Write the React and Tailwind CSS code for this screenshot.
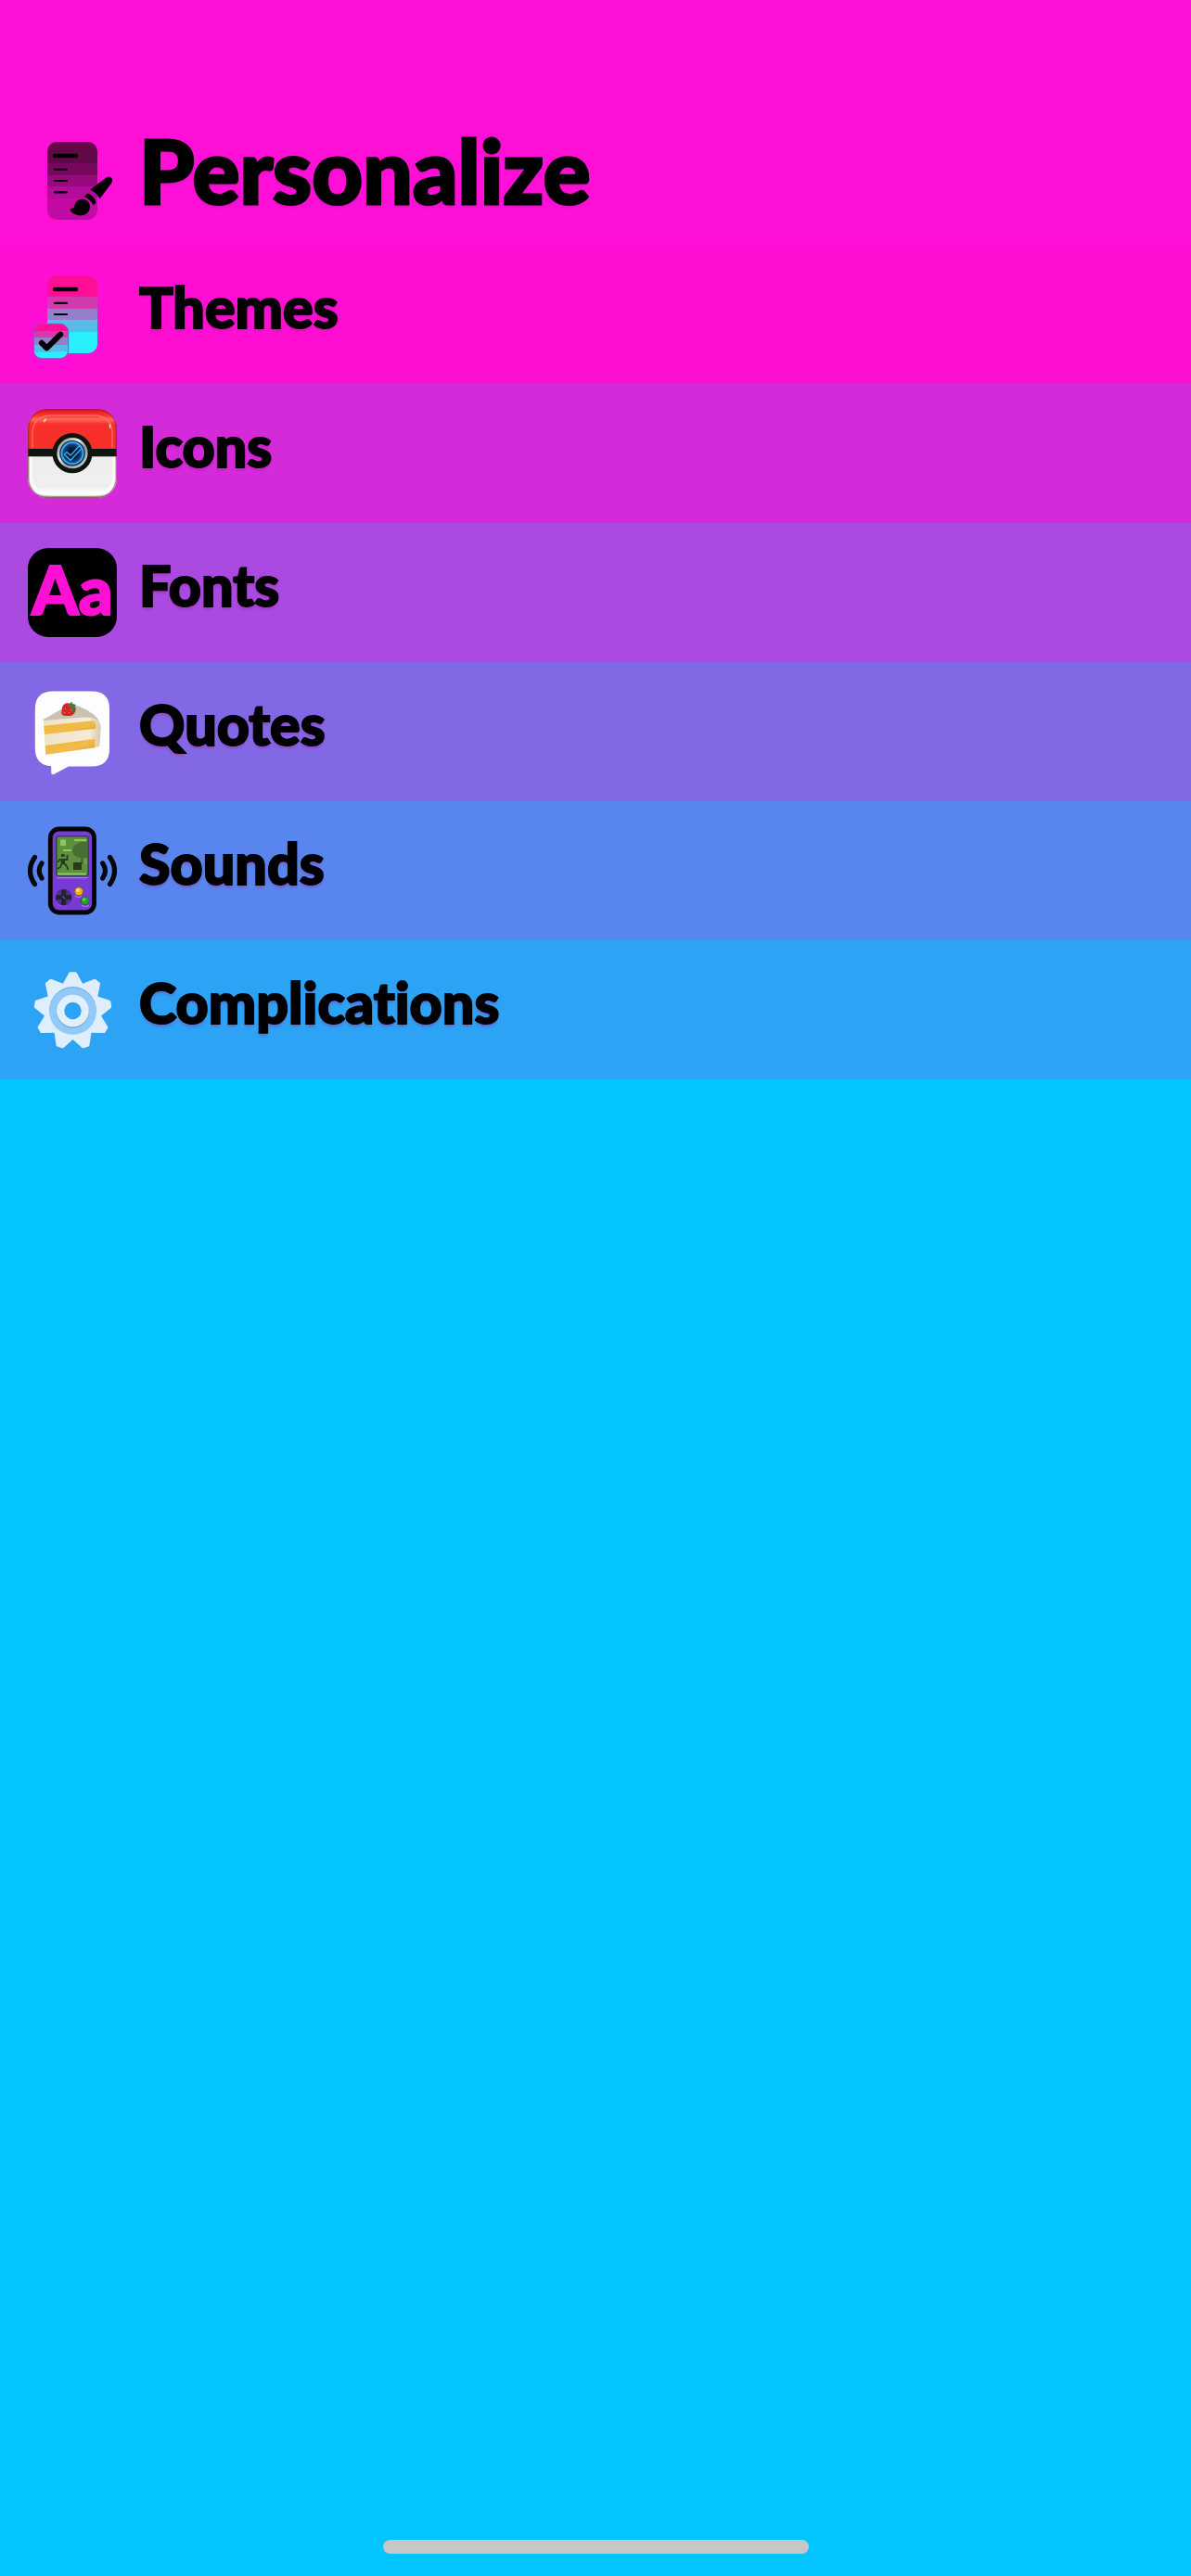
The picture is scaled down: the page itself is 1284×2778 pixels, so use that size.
import React from "react";

function Doc({ colors, lines }) {
  const edges = [6, 29, 42, 54, 67, 90];
  return (
    <g>
      <clipPath id={`doc-${lines}`}>
        <rect x="21" y="6" width="54" height="84" rx="10" />
      </clipPath>
      <g clipPath={`url(#doc-${lines})`}>
        {colors.map((c, i) => (
          <rect key={c} x="21" y={edges[i]} width="54" height={edges[i + 1] - edges[i]} fill={c} />
        ))}
      </g>
      <path d="M29 21H52" stroke="#000" strokeWidth="4.4" strokeLinecap="round" />
      {[35.8, 48, 60.3].slice(0, lines).map((y) => (
        <path key={y} d={`M29 ${y}H42`} stroke="#000" strokeWidth="2.2" strokeLinecap="round" />
      ))}
    </g>
  );
}

function PersonalizeIcon() {
  return (
    <svg viewBox="0 0 96 96" className="size-24 shrink-0" aria-hidden="true">
      <Doc lines={3} colors={["#610848", "#760860", "#960a7d", "#b50b99", "#c20ba5"]} />
      <path d="M67.3 57.6L84.5 44.6Q88.5 42.3 90.6 45.2Q92 47.5 90.2 50.6L77.6 67.4Q74 61 67.3 57.6Z" />
      <path d="M64.2 61.4Q72 64 73.6 71.5L70.8 74.2Q67.5 68 60.8 65.2Z" />
      <path d="M58.5 67.7C64 67.7 67 71.5 67 76C67 81.5 62.5 85.4 56.5 85.4C51.5 85.4 46.5 82.5 45.7 79.3C45.5 77.6 47 78 48.5 77.5C51 76.8 49.8 74.5 51.5 71.5C53 69 55.7 67.7 58.5 67.7Z" />
    </svg>
  );
}

function ThemesIcon() {
  const colors = ["#ff0e98", "#d33aae", "#937fcc", "#56bde6", "#29f0fd"];
  const edges = [58, 66.3, 73, 81, 88.3, 96];
  return (
    <svg viewBox="0 0 96 96" className="size-24 shrink-0" aria-hidden="true">
      <Doc lines={2} colors={colors} />
      <clipPath id="badge">
        <rect x="6.3" y="58.3" width="37.4" height="37.4" rx="9" />
      </clipPath>
      <g clipPath="url(#badge)">
        {colors.map((c, i) => (
          <rect key={c} x="6" y={edges[i]} width="38" height={edges[i + 1] - edges[i]} fill={c} />
        ))}
      </g>
      <rect x="6.3" y="58.3" width="37.4" height="37.4" rx="9" fill="none" stroke="#a044c8" strokeWidth="1" />
      <path d="M14.9 78.8L20.4 84.4L35.2 69.6" fill="none" stroke="#000" strokeWidth="6" strokeLinecap="round" strokeLinejoin="round" />
    </svg>
  );
}

function BallIcon() {
  return (
    <svg viewBox="0 0 96 96" className="size-24 shrink-0" aria-hidden="true">
      <defs>
        <clipPath id="ball"><rect width="96" height="96" rx="21" /></clipPath>
        <linearGradient id="red" x2="0" y2="1">
          <stop offset="0" stopColor="#f20d10" /><stop offset=".18" stopColor="#fa3b32" />
          <stop offset=".25" stopColor="#ff6b5c" /><stop offset=".38" stopColor="#f92f2b" />
          <stop offset="1" stopColor="#f7302b" />
        </linearGradient>
        <linearGradient id="white" x2="0" y2="1">
          <stop offset="0" stopColor="#ededed" /><stop offset=".75" stopColor="#efefef" />
          <stop offset=".88" stopColor="#fff" /><stop offset="1" stopColor="#aaa" />
        </linearGradient>
        <linearGradient id="chrome" x2="1" y2="1">
          <stop offset="0" stopColor="#777" /><stop offset=".4" stopColor="#eee" />
          <stop offset=".6" stopColor="#999" /><stop offset="1" stopColor="#ddd" />
        </linearGradient>
        <radialGradient id="lens">
          <stop offset="0" stopColor="#01060c" /><stop offset=".6" stopColor="#052849" />
          <stop offset="1" stopColor="#1168ad" />
        </radialGradient>
      </defs>
      <g clipPath="url(#ball)">
        <rect width="96" height="44" fill="url(#red)" />
        <rect y="51" width="96" height="45" fill="url(#white)" />
        <path d="M5 42V27Q5 8 24 7H72Q91 8 91 27V42" fill="none" stroke="#ff7767" strokeWidth="1.5" opacity=".8" />
        <path d="M3 51V72Q4 91 24 92H72Q92 91 93 72V51" fill="none" stroke="#fff" strokeWidth="3" opacity=".8" />
        <rect y="43" width="96" height="8.3" fill="#0c160e" />
        <rect x=".7" y=".7" width="94.6" height="94.6" rx="20" fill="none" stroke="#712c37" strokeWidth="1.4" opacity=".6" />
      </g>
      <path d="M17.5 13.5L19.5 11M88.5 17V20" stroke="#ffe0cf" strokeWidth="1.4" strokeLinecap="round" />
      <circle cx="48" cy="47.7" r="21.6" fill="#0c160e" />
      <circle cx="48" cy="47.7" r="16.6" fill="url(#chrome)" />
      <circle cx="48" cy="47.7" r="13.8" fill="#0a2038" />
      <circle cx="48" cy="47.7" r="11.6" fill="url(#lens)" stroke="#38a5f4" strokeWidth="2" />
      <path d="M39.5 49L42 46.5L46 50L55.5 40L58 42.5L46 55.5Z" fill="#06203b" stroke="#43aaf5" strokeWidth="1.3" strokeLinejoin="round" />
    </svg>
  );
}

function FontsIcon() {
  return (
    <span aria-hidden="true" className="flex size-24 shrink-0 items-center justify-center rounded-[22px] bg-black pb-2 text-[72px] leading-none font-black text-[#ff10d5] [-webkit-text-stroke:2px_#ff10d5]">
      Aa
    </span>
  );
}

function QuotesIcon() {
  return (
    <svg viewBox="0 0 96 96" className="size-24 shrink-0" aria-hidden="true">
      <defs>
        <linearGradient id="cream" x2="1" y2="0">
          <stop offset="0" stopColor="#eee2ca" /><stop offset=".8" stopColor="#f6ebd7" /><stop offset="1" stopColor="#d8c8a8" />
        </linearGradient>
        <linearGradient id="sponge" x2="1" y2="1">
          <stop offset="0" stopColor="#efb83c" /><stop offset=".6" stopColor="#f0bb48" /><stop offset="1" stopColor="#cf9425" />
        </linearGradient>
      </defs>
      <path d="M27 4.5H69Q88 4.5 88 23.5V66.5Q88 85.5 69 85.5H44L28 94Q25.2 95 25.2 92V85.3Q8 84 7.8 66.5V23.5Q8 4.5 27 4.5Z" fill="#fdfdff" />
      <path d="M16.7 34.5L40 30L70 32Q78 35 78.8 43L77.3 64L72 65.2L19.3 72.7Z" fill="url(#cream)" />
      <path d="M16.7 35L40 21.5Q47 16.5 57 21.5Q74 29 77 37Q72 32 60 32.5L16.7 36Z" fill="#c9c1b2" />
      <path d="M17.3 41.7L70 36.2Q74 36.5 73.3 44.7L18 51Z" fill="url(#sponge)" />
      <path d="M18.7 63L72.7 55.7L72.3 65.3L19.3 72.7Z" fill="url(#sponge)" />
      <path d="M37 22Q39 16.5 44 17.5Q52 18 51.5 25Q50.5 30.5 45 31Q36 31.5 36.3 28Z" fill="#dc2229" />
      <path d="M40 23L41 24M44 27L45 28M39 27L40 28M46 24L47 25" stroke="#ff9b82" strokeWidth="1" />
      <path d="M43 18L46 17.5L47 15.5L48.5 18L52 19L50.5 21L52.5 24L49.5 24L48.5 27L46.5 22.5L43 20.5Z" fill="#4c7a35" />
    </svg>
  );
}

function SoundsIcon() {
  return (
    <svg viewBox="0 0 96 96" className="size-24 shrink-0" aria-hidden="true">
      <g fill="none" stroke="#05070d" strokeWidth="5.2" strokeLinecap="round">
        <path d="M7.500 33.500Q-2.500 48 7.500 62.500M15 40Q9.500 48 15 56M88.500 33.500Q98.500 48 88.500 62.500M80.700 40Q86.300 48 80.700 56" />
      </g>
      <rect x="24.3" y="3" width="47.2" height="90" rx="9.5" fill="#783bd3" stroke="#050505" strokeWidth="4.8" />
      <path d="M32 55.5H64" stroke="#aa7cf3" strokeWidth="1.5" strokeLinecap="round" />
      <rect x="30.8" y="10.8" width="34.4" height="43" rx="3" fill="#5d8f3e" stroke="#33454c" strokeWidth="1.6" />
      <path d="M64.4 17H58Q48 19 48 27Q49 33 57 34V41H60V34H64.4Z" fill="#486f32" />
      <rect x="35" y="14.5" width="6" height="6.5" fill="#8bc960" />
      <path d="M50 15H63M38 26H47M32 51.5H63" stroke="#8bc960" strokeWidth="2" />
      <rect x="49" y="39" width="9" height="8" fill="#263b20" />
      <rect x="60" y="35" width="4" height="6" fill="#6da04b" />
      <path d="M36 30H39.5V33H36ZM35 35H40V41H36Z" fill="#263b20" />
      <path d="M35 35.5L32 39M40 36H42.5V31M37 40L35 44L32 46M39 40L42 43L43.5 47" fill="none" stroke="#263b20" strokeWidth="1.8" />
      <path d="M31 82Q38 89 46 82M51 75Q55 78 58 75M58 85Q62 88 66 85" fill="none" stroke="#a078ed" strokeWidth="1.2" />
      <circle cx="38.7" cy="76.7" r="9.2" fill="#572b9e" />
      <path d="M36.2 68.5H41.2V74.2H47V79.2H41.2V85H36.2V79.2H30.5V74.2H36.2Z" fill="#222331" />
      <path d="M37 75L40.5 78.5" stroke="#777a83" strokeWidth="1" />
      <circle cx="55" cy="70.3" r="4.5" fill="#edb313" stroke="#84501e" strokeWidth=".8" />
      <circle cx="54" cy="69" r="1.8" fill="#ffe48d" />
      <circle cx="61.7" cy="80.3" r="4.5" fill="#25a12c" stroke="#214f3a" strokeWidth=".8" />
      <circle cx="60.7" cy="79" r="1.5" fill="#69d96b" />
    </svg>
  );
}

function GearIcon() {
  const at = (r, deg) => {
    const a = (deg * Math.PI) / 180;
    return `${48.5 + r * Math.sin(a)},${49 - r * Math.cos(a)}`;
  };
  const points = Array.from({ length: 9 }, (_, i) =>
    [at(40.5, i * 40 - 6.5), at(42, i * 40 - 4.8), at(42, i * 40 + 4.8), at(40.5, i * 40 + 6.5), at(31, i * 40 + 20)].join(" ")
  ).join(" ");
  return (
    <svg viewBox="0 0 96 96" className="size-24 shrink-0" aria-hidden="true">
      <polygon points={points} fill="#dfeefc" />
      <circle cx="48.5" cy="48.3" r="25.3" fill="#78afd9" />
      <circle cx="48.5" cy="49.5" r="25.3" fill="#91caf9" />
      <circle cx="48.5" cy="50.5" r="17.3" fill="#77add8" />
      <circle cx="48.5" cy="49" r="17.3" fill="#e2effc" />
      <circle cx="48.5" cy="49" r="9.2" fill="#2da3f5" />
    </svg>
  );
}

const items = [
  { label: "Themes", Icon: ThemesIcon, bg: "bg-[#ff0fd4]" },
  { label: "Icons", Icon: BallIcon, bg: "bg-[#d52ada]" },
  { label: "Fonts", Icon: FontsIcon, bg: "bg-[#aa4ae0]" },
  { label: "Quotes", Icon: QuotesIcon, bg: "bg-[#8368e6]" },
  { label: "Sounds", Icon: SoundsIcon, bg: "bg-[#5886ee]" },
  { label: "Complications", Icon: GearIcon, bg: "bg-[#2da3f5]" },
];

export default function App() {
  return (
    <main className="flex min-h-screen flex-col bg-[#04c4ff] font-['Lato',sans-serif] font-black text-black [font-variant-ligatures:none]">
      <header className="flex items-center gap-6 bg-[#ff10d7] px-[30px] pt-[147px] pb-[21px]">
        <PersonalizeIcon />
        <h1 className="pb-6 text-[95px] leading-[72px] [-webkit-text-stroke:3px_#000] text-shadow-[0_3px_3px_rgb(170_20_150/0.4)]">Personalize</h1>
      </header>
      <nav aria-label="Personalize">
        <ul>
          {items.map(({ label, Icon, bg }) => (
            <li key={label} className={bg}>
              <button type="button" className="flex w-full items-center gap-6 px-[30px] py-[27px] text-left">
                <Icon />
                <span className="pb-4 text-[61px] leading-[72px] [-webkit-text-stroke:2px_#000] text-shadow-[0_3px_3px_rgb(170_20_150/0.4)]">{label}</span>
              </button>
            </li>
          ))}
        </ul>
      </nav>
      <div className="mx-auto mt-auto mb-6 h-[15px] w-[459px] max-w-full rounded-full bg-[#c7c7c7]" />
    </main>
  );
}
